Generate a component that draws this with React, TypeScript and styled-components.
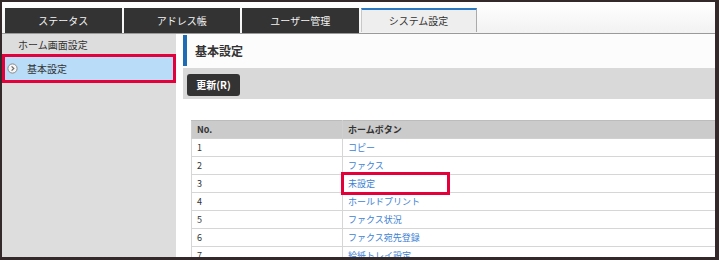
import React from "react";
import styled, { createGlobalStyle } from "styled-components";

const Global = createGlobalStyle`
  html, body { margin: 0; padding: 0; background: #ffffff; }
  body { font-family: "Noto Sans CJK JP", "Noto Sans", sans-serif; }
`;

const Frame = styled.div`
  width: 719px;
  height: 260px;
  box-sizing: border-box;
  border: 2px solid #34292a;
  border-right-width: 4px;
  border-bottom-width: 3px;
  background: #fff;
  overflow: hidden;
  display: flex;
  flex-direction: column;
`;

const TabBar = styled.div`
  display: flex;
  gap: 2px;
  padding: 6px 0 0 3px;
  height: 25px;
  border-bottom: 1px solid #9a9a9a;
  background: linear-gradient(#ffffff, #f2f2f2);
  flex-shrink: 0;
`;

const Tab = styled.div<{ $active?: boolean }>`
  width: ${(p) => (p.$active ? "116px" : "116.5px")};
  height: ${(p) => (p.$active ? "24px" : "25px")};
  box-sizing: border-box;
  display: flex;
  align-items: center;
  justify-content: center;
  font-size: 10px;
  color: ${(p) => (p.$active ? "#333" : "#f4f4f4")};
  background: ${(p) => (p.$active ? "#eeeeee" : "#333333")};
  border-top: ${(p) => (p.$active ? "2px solid #2b78c2" : "none")};
  border-left: ${(p) => (p.$active ? "1px solid #c8c8c8" : "none")};
  border-right: ${(p) => (p.$active ? "1px solid #aaaaaa" : "none")};
  position: relative;
  z-index: 1;
  margin-bottom: ${(p) => (p.$active ? "-1px" : "0")};
  padding-bottom: ${(p) => (p.$active ? "2px" : "0")};
`;

const Body = styled.div`
  flex: 1;
  display: flex;
  gap: 7px;
  min-height: 0;
`;

const Sidebar = styled.div`
  width: 174px;
  flex-shrink: 0;
  background: #dddddd;
  display: flex;
  flex-direction: column;
`;

const NavItem = styled.div<{ $selected?: boolean }>`
  height: ${(p) => (p.$selected ? "29px" : "20px")};
  flex-shrink: 0;
  display: flex;
  align-items: center;
  gap: 9px;
  padding-left: ${(p) => (p.$selected ? "5px" : "16px")};
  font-size: 10px;
  color: #333;
  background: ${(p) => (p.$selected ? "#b9dcf8" : "transparent")};
  outline: ${(p) => (p.$selected ? "3px solid #e4003b" : "none")};
  outline-offset: -3px;
  box-sizing: border-box;
`;

const Main = styled.div`
  flex: 1;
  display: flex;
  flex-direction: column;
  min-width: 0;
`;

const HeaderBlock = styled.div`
  height: 34px;
  flex-shrink: 0;
  padding-top: 1px;
  box-sizing: border-box;
  background: #fcfcfc;
`;

const Title = styled.h1`
  margin: 0;
  height: 31px;
  border-left: 4px solid #1e6cb3;
  padding-left: 8px;
  display: flex;
  align-items: center;
  font-size: 12px;
  font-weight: 700;
  color: #333;
`;

const Toolbar = styled.div`
  height: 31px;
  flex-shrink: 0;
  background: #d9d9d9;
  display: flex;
  align-items: center;
  padding-left: 4px;
`;

const Button = styled.button`
  width: 53px;
  height: 22px;
  border: none;
  border-radius: 3px;
  background: #333333;
  color: #ffffff;
  font-family: inherit;
  font-size: 10px;
  font-weight: 700;
  padding: 0;
  margin-top: 2px;
`;

const TableWrap = styled.div`
  flex-shrink: 0;
  padding: 21px 0 0 8px;
`;

const Table = styled.table`
  border-collapse: collapse;
  width: 530px;
  font-size: 9px;
  color: #333;
`;

const Th = styled.th<{ $w?: number }>`
  background: #cbcbcb;
  text-align: left;
  font-weight: 700;
  height: 17px;
  padding: 0 0 0 5px;
  border: 1px solid #d0d0d0;
  border-top: 1px solid #bcbcbc;
  width: ${(p) => (p.$w ? `${p.$w}px` : "auto")};
`;

const Td = styled.td`
  height: 17px;
  padding: 0 0 0 5px;
  border: 1px solid #d6d6d6;
  position: relative;
`;

const Link = styled.a`
  color: #3d7fd4;
  text-decoration: none;
`;

const Highlight = styled.span`
  position: absolute;
  left: -2px;
  top: -3px;
  width: 109px;
  height: 23px;
  box-sizing: border-box;
  border: 3px solid #e4003b;
  pointer-events: none;
`;

const ArrowIcon = () => (
  <svg width="11" height="11" viewBox="0 0 11 11">
    <circle cx="5.5" cy="5.5" r="4.6" fill="#f6f6f6" stroke="#8a8a8a" strokeWidth="1" />
    <path d="M4.6 3.3 L6.8 5.5 L4.6 7.7" fill="none" stroke="#6a6a6a" strokeWidth="1.2" />
  </svg>
);

const rows = [
  "コピー",
  "ファクス",
  "未設定",
  "ホールドプリント",
  "ファクス状況",
  "ファクス宛先登録",
  "給紙トレイ設定",
];

export default function App() {
  return (
    <>
      <Global />
      <Frame>
        <TabBar>
          <Tab>ステータス</Tab>
          <Tab>アドレス帳</Tab>
          <Tab>ユーザー管理</Tab>
          <Tab $active>システム設定</Tab>
        </TabBar>
        <Body>
          <Sidebar>
            <NavItem>ホーム画面設定</NavItem>
            <NavItem $selected>
              <ArrowIcon />
              基本設定
            </NavItem>
          </Sidebar>
          <Main>
            <HeaderBlock>
              <Title>基本設定</Title>
            </HeaderBlock>
            <Toolbar>
              <Button>更新(R)</Button>
            </Toolbar>
            <TableWrap>
              <Table>
                <thead>
                  <tr>
                    <Th $w={145}>No.</Th>
                    <Th>ホームボタン</Th>
                  </tr>
                </thead>
                <tbody>
                  {rows.map((r, i) => (
                    <tr key={i}>
                      <Td>{i + 1}</Td>
                      <Td>
                        <Link href="#">{r}</Link>
                        {i === 2 && <Highlight />}
                      </Td>
                    </tr>
                  ))}
                </tbody>
              </Table>
            </TableWrap>
          </Main>
        </Body>
      </Frame>
    </>
  );
}
